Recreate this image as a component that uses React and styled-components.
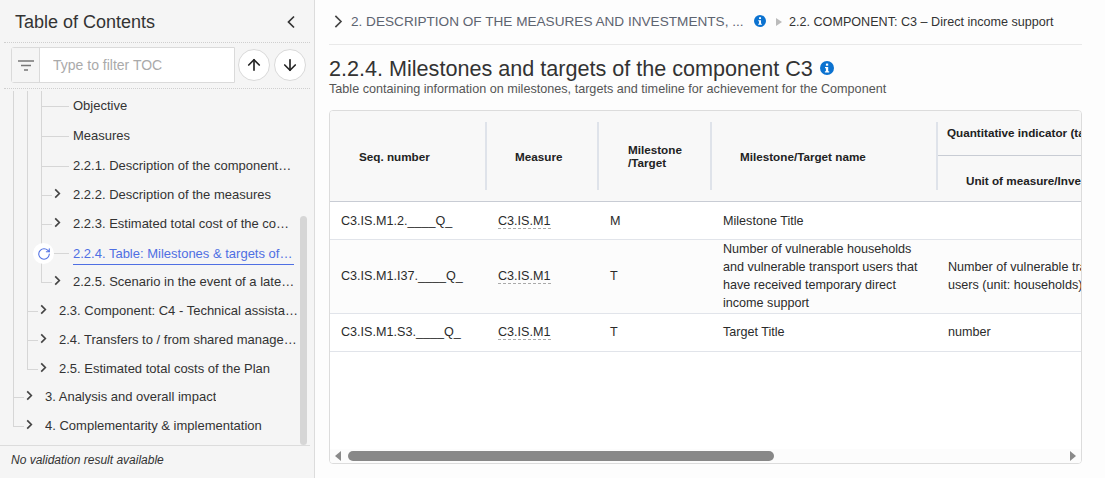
import React from "react";
import styled, { createGlobalStyle } from "styled-components";
import { ArrowUp, ArrowDown, RotateCw } from "lucide-react";

const Global = createGlobalStyle`
  html, body { margin: 0; padding: 0; height: 478px; overflow: hidden; }
  body { font-family: "Liberation Sans", Arial, sans-serif; background: #fdfdfd; color: #333; }
  * { box-sizing: border-box; }
`;

const Page = styled.div`
  display: flex;
  width: 1105px;
  height: 478px;
`;

const Sidebar = styled.aside`
  position: relative;
  flex: 0 0 315px;
  min-width: 0;
  display: flex;
  flex-direction: column;
  background: #f5f5f5;
  border-right: 1px solid #dcdcdc;
`;

const SideHeader = styled.header`
  height: 43px;
  margin: 0 4px;
  padding: 2px 14px 0 11px;
  display: flex;
  align-items: center;
  justify-content: space-between;
  border-bottom: 1px dotted #cfcfcf;
`;

const SideTitle = styled.h2`
  margin: 0;
  font-size: 18px;
  font-weight: 400;
  color: #333;
`;

const FilterBar = styled.div`
  height: 46px;
  margin: 0 4px;
  padding: 0 0 1px 7px;
  display: flex;
  align-items: center;
  border-bottom: 1px dotted #cfcfcf;
`;

const FilterBox = styled.div`
  display: flex;
  width: 224px;
  height: 36px;
  margin-right: 3px;
  border: 1px solid #dadada;
  border-radius: 3px 0 0 3px;
  background: #fff;
`;

const FilterIcon = styled.div`
  flex: 0 0 28px;
  display: flex;
  align-items: center;
  justify-content: center;
  background: #f5f5f5;
  border-right: 1px solid #dadada;
`;

const FilterInput = styled.input`
  flex: 1;
  min-width: 0;
  padding: 0 13px;
  border: 0;
  outline: 0;
  background: transparent;
  font: 14px "Liberation Sans", Arial, sans-serif;
  &::placeholder { color: #aaa; opacity: 1; }
`;

const RoundButton = styled.button`
  flex: 0 0 32px;
  width: 32px;
  height: 32px;
  margin-right: 4px;
  padding: 0;
  display: flex;
  align-items: center;
  justify-content: center;
  border: 1px solid #d9d9d9;
  border-radius: 50%;
  background: #fff;
  color: #222;
`;

const Tree = styled.ul`
  flex: 1;
  margin: 0;
  padding: 2px 0 0 13px;
  list-style: none;
  overflow: hidden;
`;

const Row = styled.li`
  display: flex;
  align-items: stretch;
  height: ${(p) => p.$h}px;
  font-size: 13px;
`;

const Guide = styled.span`
  flex: 0 0 14px;
  border-left: 1px solid #d6d6d6;
`;

const Branch = styled.span`
  position: relative;
  flex: 0 0 32px;
  display: flex;
  align-items: center;
  padding-left: 11px;
  &::before {
    content: "";
    position: absolute;
    left: 0;
    top: 0;
    bottom: ${(p) => (p.$last ? "50%" : "0")};
    border-left: 1px solid #d6d6d6;
  }
  &::after {
    content: "";
    position: absolute;
    left: 0;
    top: 50%;
    width: ${(p) => (p.$leaf ? "28px" : "11px")};
    border-top: 1px solid #d6d6d6;
  }
`;

const Label = styled.span`
  align-self: center;
  display: block;
  max-width: ${(p) => p.$max}px;
  width: ${(p) => (p.$active ? `${p.$max}px` : "auto")};
  margin-top: ${(p) => (p.$active ? "2px" : "0")};
  line-height: ${(p) => (p.$active ? "21px" : "18px")};
  white-space: nowrap;
  overflow: hidden;
  text-overflow: ellipsis;
  color: ${(p) => (p.$active ? "#4f6fe3" : "#333")};
  border-bottom: ${(p) => (p.$active ? "1px solid #4f6fe3" : "0")};
`;

const Spinner = styled.span`
  position: absolute;
  left: -8px;
  top: 50%;
  z-index: 1;
  width: 21px;
  height: 21px;
  margin-top: -10px;
  display: flex;
  align-items: center;
  justify-content: center;
  border-radius: 50%;
  background: #fff;
  color: #4f6fe3;
`;

const ScrollThumb = styled.div`
  position: absolute;
  left: 300px;
  top: 216px;
  width: 7px;
  height: 229px;
  border-radius: 4px;
  background: #d6d6d6;
`;

const SideFooter = styled.footer`
  height: 33px;
  margin-right: 4px;
  padding: 0 0 4px 11px;
  display: flex;
  align-items: center;
  border-top: 1px solid #dcdcdc;
  font-size: 12px;
  font-style: italic;
  color: #333;
`;

const Main = styled.main`
  flex: 1;
  min-width: 0;
  padding: 0 23px 0 14px;
  display: flex;
  flex-direction: column;
`;

const Crumbs = styled.nav`
  height: 45px;
  flex: none;
  display: flex;
  align-items: center;
  padding: 0 0 1px 2px;
  border-bottom: 1px solid #e9e9e9;
`;

const CrumbParent = styled.span`
  flex: 0 0 393px;
  margin: 0 10px 0 5px;
  font-size: 13.6px;
  color: #5d6470;
  white-space: nowrap;
`;

const CrumbCurrent = styled.span`
  margin-left: 6px;
  font-size: 12.6px;
  color: #333;
  white-space: nowrap;
`;

const Heading = styled.h1`
  margin: 11px 0 0;
  display: flex;
  align-items: center;
  gap: 7px;
  font-size: 21.6px;
  line-height: 25px;
  font-weight: 400;
  color: #333;
`;

const Sub = styled.p`
  margin: 1px 0 13px;
  font-size: 12.63px;
  line-height: 15px;
  color: #555;
`;

const Card = styled.section`
  height: 354px;
  flex: none;
  display: flex;
  flex-direction: column;
  border: 1px solid #dcdcdc;
  border-radius: 4px;
  background: #fff;
  overflow: hidden;
`;

const TableClip = styled.div`
  flex: 1;
  min-height: 0;
  overflow: hidden;
`;

const Table = styled.table`
  table-layout: fixed;
  width: 1107px;
  border-collapse: separate;
  border-spacing: 0;
  font-size: 12.6px;
`;

const Col = styled.col`
  width: ${(p) => p.$w}px;
`;

const Th = styled.th`
  position: relative;
  height: ${(p) => p.$h}px;
  padding: ${(p) => p.$pt || 0}px 8px ${(p) => p.$pb || 0}px ${(p) => p.$pl}px;
  background: #f8f8f8;
  text-align: left;
  font-size: 11.7px;
  line-height: 13px;
  font-weight: 700;
  color: #222;
  white-space: nowrap;
  border-bottom: 1px solid #c8ccd4;
  &::before {
    content: ${(p) => (p.$sep ? '""' : "none")};
    position: absolute;
    left: ${(p) => p.$sepLeft ?? -2}px;
    top: ${(p) => p.$sepTop ?? 11}px;
    bottom: ${(p) => p.$sepBottom ?? 11}px;
    width: 2px;
    background: #dfe3ea;
  }
`;

const Tr = styled.tr`
  background: ${(p) => (p.$alt ? "#fcfcfc" : "#fff")};
`;

const Td = styled.td`
  height: ${(p) => p.$h}px;
  padding: 0 10px ${(p) => p.$pb}px 11px;
  border-bottom: 1px solid #e1e4ea;
  line-height: 18px;
  color: #2b2b2b;
  vertical-align: middle;
`;

const UnitText = styled.div`
  width: 180px;
`;

const Link = styled.span`
  border-bottom: 1px dashed #aaa;
`;

const Bar = styled.div`
  flex: 0 0 14px;
  display: flex;
  align-items: center;
  padding: 0 5px;
  background: #fcfcfc;
`;

const Track = styled.div`
  flex: 1;
  padding: 0 7px;
`;

const Thumb = styled.div`
  width: 426px;
  height: 10px;
  border-radius: 5px;
  background: #888;
`;

const ChevSvg = styled.svg`
  flex: none;
  margin-top: ${(p) => (p.$up ? `-${p.$up}px` : "0")};
`;

const Chev = ({ size = 12, up = 0, weight = 1.8 }) => (
  <ChevSvg $up={up} width={size} height={size} viewBox="0 0 12 12" fill="none" stroke="#444" strokeWidth={weight}>
    <path d="M3.5 1.5 8 6l-4.5 4.5" />
  </ChevSvg>
);

const InfoSvg = styled.svg`
  flex: none;
  margin-top: -1px;
`;

const Info = ({ size = 12 }) => (
  <InfoSvg width={size} height={size} viewBox="0 0 14 14">
    <circle cx="7" cy="7" r="7" fill="#0b72d0" />
    <rect x="5.9" y="2.6" width="2.3" height="2.1" fill="#fff" />
    <path d="M5 6h3.2v4.2h1v1.2H4.9v-1.2h1V7.2H5z" fill="#fff" />
  </InfoSvg>
);

const CrumbArrow = styled.svg`
  flex: none;
  margin-left: 9px;
`;

const items = [
  { t: "Objective", l: 3, h: 30, leaf: true },
  { t: "Measures", l: 3, h: 30, leaf: true },
  { t: "2.2.1. Description of the component and its objectives", l: 3, h: 29, leaf: true, w: 220 },
  { t: "2.2.2. Description of the measures", l: 3, h: 29 },
  { t: "2.2.3. Estimated total cost of the component", l: 3, h: 29 },
  { t: "2.2.4. Table: Milestones & targets of the component", l: 3, h: 30, leaf: true, active: true, w: 221 },
  { t: "2.2.5. Scenario in the event of a late delivery", l: 3, h: 28, last: true },
  { t: "2.3. Component: C4 - Technical assistance", l: 2, h: 29 },
  { t: "2.4. Transfers to / from shared management", l: 2, h: 29 },
  { t: "2.5. Estimated total costs of the Plan", l: 2, h: 29, last: true },
  { t: "3. Analysis and overall impact", l: 1, h: 28 },
  { t: "4. Complementarity & implementation", l: 1, h: 29, last: true },
];

const rows = [
  { seq: "C3.IS.M1.2.____Q_", mt: "M", name: "Milestone Title", unit: "", h: 38, pb: 0 },
  {
    seq: "C3.IS.M1.I37.____Q_",
    mt: "T",
    name: "Number of vulnerable households and vulnerable transport users that have received temporary direct income support",
    unit: "Number of vulnerable transport users (unit: households)",
    h: 74,
    pb: 1,
    alt: true,
  },
  { seq: "C3.IS.M1.S3.____Q_", mt: "T", name: "Target Title", unit: "number", h: 38, pb: 2 },
];

const labelWidth = (it) => it.w || (it.l === 3 ? 222 : 239);

export default function App() {
  return (
    <Page>
      <Global />
      <Sidebar>
        <SideHeader>
          <SideTitle>Table of Contents</SideTitle>
          <svg width="10" height="14" viewBox="0 0 10 14" fill="none" stroke="#333" strokeWidth="1.7">
            <path d="M8 1.5 2.5 7 8 12.5" />
          </svg>
        </SideHeader>
        <FilterBar>
          <FilterBox>
            <FilterIcon>
              <svg width="16" height="11" viewBox="0 0 16 11" fill="none" stroke="#777" strokeWidth="1.5">
                <path d="M0 1h16M3 5.5h10M6 10h4" />
              </svg>
            </FilterIcon>
            <FilterInput placeholder="Type to filter TOC" />
          </FilterBox>
          <RoundButton aria-label="Previous"><ArrowUp size={18} strokeWidth={2.2} /></RoundButton>
          <RoundButton aria-label="Next"><ArrowDown size={18} strokeWidth={2.2} /></RoundButton>
        </FilterBar>
        <Tree>
          {items.map((it) => (
            <Row key={it.t} $h={it.h}>
              {Array.from({ length: it.l - 1 }, (_, i) => <Guide key={i} />)}
              <Branch $leaf={it.leaf} $last={it.last}>
                {!it.leaf && <Chev size={11} up={3} />}
                {it.active && (
                  <Spinner><RotateCw size={14} strokeWidth={1.8} /></Spinner>
                )}
              </Branch>
              <Label $active={it.active} $max={labelWidth(it)}>{it.t}</Label>
            </Row>
          ))}
        </Tree>
        <ScrollThumb />
        <SideFooter>No validation result available</SideFooter>
      </Sidebar>
      <Main>
        <Crumbs>
          <Chev size={15} weight={1.3} />
          <CrumbParent>2. DESCRIPTION OF THE MEASURES AND INVESTMENTS, ...</CrumbParent>
          <Info size={12} />
          <CrumbArrow width="8" height="10" viewBox="0 0 8 10">
            <path d="M1 1l6 4-6 4z" fill="#bbb" />
          </CrumbArrow>
          <CrumbCurrent>2.2. COMPONENT: C3 – Direct income support</CrumbCurrent>
        </Crumbs>
        <Heading>
          2.2.4. Milestones and targets of the component C3
          <Info size={14} />
        </Heading>
        <Sub>Table containing information on milestones, targets and timeline for achievement for the Component</Sub>
        <Card>
          <TableClip>
            <Table>
              <colgroup>
                <Col $w={157} />
                <Col $w={112} />
                <Col $w={113} />
                <Col $w={225} />
                <Col $w={500} />
              </colgroup>
              <thead>
                <tr>
                  <Th rowSpan={2} $h={90} $pl={29}>Seq. number</Th>
                  <Th rowSpan={2} $h={90} $pl={28} $sep>Measure</Th>
                  <Th rowSpan={2} $h={90} $pl={29} $sep>Milestone<br />/Target</Th>
                  <Th rowSpan={2} $h={90} $pl={28} $sep>Milestone/Target name</Th>
                  <Th $h={45} $pl={10} $pb={2} $sep $sepLeft={-1} $sepBottom={-1}>Quantitative indicator (target)</Th>
                </tr>
                <tr>
                  <Th $h={46} $pl={29} $pt={3} $sep $sepLeft={-1} $sepTop={0}>Unit of measure/Investment</Th>
                </tr>
              </thead>
              <tbody>
                {rows.map((r) => (
                  <Tr key={r.seq} $alt={r.alt}>
                    <Td $h={r.h} $pb={r.pb}>{r.seq}</Td>
                    <Td $h={r.h} $pb={r.pb}><Link>C3.IS.M1</Link></Td>
                    <Td $h={r.h} $pb={r.pb}>{r.mt}</Td>
                    <Td $h={r.h} $pb={r.pb}>{r.name}</Td>
                    <Td $h={r.h} $pb={r.pb}><UnitText>{r.unit}</UnitText></Td>
                  </Tr>
                ))}
              </tbody>
            </Table>
          </TableClip>
          <Bar>
            <svg width="6" height="10" viewBox="0 0 6 10"><path d="M6 0v10L0 5z" fill="#8a8a8a" /></svg>
            <Track><Thumb /></Track>
            <svg width="6" height="10" viewBox="0 0 6 10"><path d="M0 0v10l6-5z" fill="#8a8a8a" /></svg>
          </Bar>
        </Card>
      </Main>
    </Page>
  );
}
